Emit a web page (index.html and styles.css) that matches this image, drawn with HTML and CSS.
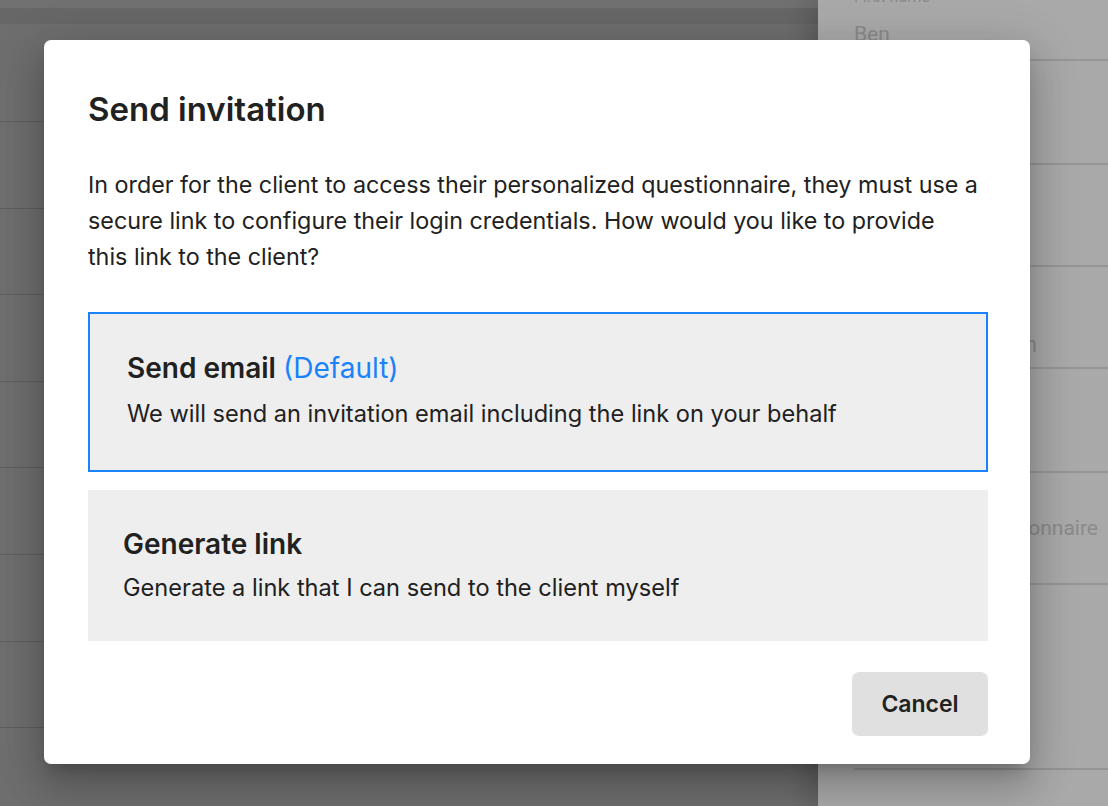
FILE: index.html
```html
<!DOCTYPE html>
<html lang="en">
<head>
<meta charset="utf-8">
<title>Send invitation</title>
<link rel="stylesheet" href="styles.css">
</head>
<body>
<div class="page">
  <main class="main">
    <div class="topband"></div>
    <div class="rows">
      <div class="row first"></div>
      <div class="row"></div>
      <div class="row"></div>
      <div class="row"></div>
      <div class="row"></div>
      <div class="row"></div>
      <div class="row"></div>
      <div class="row"></div>
      <div class="row"></div>
    </div>
  </main>
  <aside class="drawer">
    <div class="field f1">
      <div class="label">First name *</div>
      <div class="value">Ben</div>
    </div>
    <div class="field f2"></div>
    <div class="field f3"></div>
    <div class="field f4"><div class="value">Ben Jackson</div></div>
    <div class="field f5"></div>
    <div class="field f6"><div class="value">Questionnaire</div></div>
    <div class="field f7"></div>
  </aside>
</div>

<div class="dialog" role="dialog">
  <h1 class="title">Send invitation</h1>
  <p class="intro">In order for the client to access their personalized questionnaire, they must use a secure link to configure their login credentials. How would you like to provide<br>this link to the client?</p>
  <div class="option selected">
    <div class="opt-title">Send email <span class="default">(Default)</span></div>
    <div class="opt-desc">We will send an invitation email including the link on your behalf</div>
  </div>
  <div class="option plain">
    <div class="opt-title">Generate link</div>
    <div class="opt-desc">Generate a link that I can send to the client myself</div>
  </div>
  <div class="actions">
    <button class="cancel">Cancel</button>
  </div>
</div>
</body>
</html>
```

FILE: styles.css
```css
html, body {
  margin: 0;
  padding: 0;
  width: 1108px;
  height: 806px;
  overflow: hidden;
  font-family: Inter, Roboto, "Liberation Sans", sans-serif;
}

.page {
  display: flex;
  width: 1108px;
  height: 806px;
}

.main {
  width: 818px;
  flex-shrink: 0;
  background: #6e6e6e;
  display: flex;
  flex-direction: column;
}

.topband {
  flex-shrink: 0;
  height: 8px;
  background: #717171;
  border-bottom: 16px solid #676767;
}

.rows {
  flex-shrink: 0;
  display: flex;
  flex-direction: column;
}

.row {
  flex-shrink: 0;
  height: 85.6px;
  border-bottom: 1px solid #5e5e5e;
}

.row.first {
  height: 97px;
}

.drawer {
  flex: 1;
  background: #a9a9a9;
  box-shadow: -10px 0 24px rgba(0,0,0,0.18);
  display: flex;
  flex-direction: column;
  color: #8a8a8a;
  font-family: Roboto, "Liberation Sans", sans-serif;
}

.field {
  flex-shrink: 0;
  border-bottom: 2px solid #959595;
  box-sizing: border-box;
}

.f1 { height: 61px; padding: 0 36px; }
.f1 .label { font-size: 16px; line-height: 20px; margin-top: -13px; }
.f1 .value { font-size: 21px; line-height: 30px; margin-top: 12px; }
.f2 { height: 104px; }
.f3 { height: 102px; }
.f4 { height: 102px; padding: 63px 71px 0 0; }
.f4 .value { font-size: 22px; line-height: 30px; text-align: right; }
.f5 { height: 104px; }
.f6 { height: 112px; padding: 40px 10px 0 0; }
.f6 .value { font-size: 21px; line-height: 30px; text-align: right; }
.f7 { height: 185px; margin-left: 36px; }

.dialog {
  position: absolute;
  left: 44px;
  top: 40px;
  width: 986px;
  height: 724px;
  box-sizing: border-box;
  background: #ffffff;
  border-radius: 7px;
  padding: 0 42px 0 44px;
  box-shadow: 0 11px 15px -7px rgba(0,0,0,0.2), 0 24px 38px 3px rgba(0,0,0,0.14), 0 9px 46px 8px rgba(0,0,0,0.12);
  color: #212121;
  display: flex;
  flex-direction: column;
}

.title {
  margin: 0;
  padding-top: 49px;
  font-size: 33px;
  line-height: 40px;
  font-weight: 600;
  color: #212121;
}

.intro {
  margin: 38px 0 0 0;
  font-size: 23.3px;
  line-height: 36px;
  color: #212121;
}

.option {
  flex-shrink: 0;
  background: #eeeeee;
  box-sizing: border-box;
}

.option.selected {
  margin-top: 37px;
  height: 160px;
  border: 2px solid #1a82fb;
  padding: 36px 37px 0 37px;
}

.option.plain {
  margin-top: 18px;
  height: 151px;
  padding: 36px 35px 0 35px;
}

.opt-title {
  font-size: 28px;
  line-height: 36px;
  font-weight: 600;
  color: #212121;
}

.default {
  color: #1a82fb;
  font-weight: 400;
}

.opt-desc {
  font-size: 23.6px;
  line-height: 30px;
  color: #212121;
}

.selected .opt-desc { margin-top: 13px; }
.plain .opt-desc { margin-top: 11px; }

.actions {
  display: flex;
  justify-content: flex-end;
  margin-top: 31px;
}

.cancel {
  width: 136px;
  height: 64px;
  border: none;
  border-radius: 7px;
  background: #e0e0e0;
  font-family: Inter, Roboto, "Liberation Sans", sans-serif;
  font-size: 23px;
  font-weight: 600;
  color: #212121;
}
```
